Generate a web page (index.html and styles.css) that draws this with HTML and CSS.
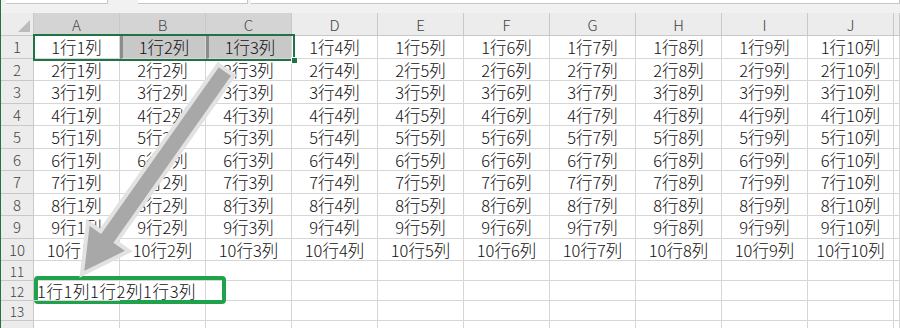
FILE: index.html
```html
<!DOCTYPE html>
<html lang="ja">
<head>
<meta charset="UTF-8">
<title>Sheet1</title>
<link rel="stylesheet" href="styles.css">
</head>
<body>
  <div class="app">
    <div class="toolbar">
      <div class="box namebox"></div>
      <div class="box fxbox"></div>
      <div class="box formula"></div>
    </div>
    <div class="sheet" id="sheet"></div>

    <div class="selection"><span class="handle"></span></div>
    <div class="result-box"></div>

    <svg class="arrow" width="900" height="328" viewBox="0 0 900 328">
      <g transform="translate(226 70) rotate(125.2)">
        <polygon points="0,-9.5 204,-9.5 204,-25 250,0 204,25 204,9.5 0,9.5" fill="#a8a8a8" stroke="#e2e2e2" stroke-width="4" stroke-linejoin="miter"/>
      </g>
    </svg>
  </div>

  <script>
    const cols = ['A', 'B', 'C', 'D', 'E', 'F', 'G', 'H', 'I', 'J', ''];
    const sheet = document.getElementById('sheet');
    let html = '<div class="corner"><span class="tri"></span></div>';

    // 列見出し
    cols.forEach((c, i) => {
      const sel = i < 3 ? ' sel' : '';
      html += `<div class="colhead${sel}">${c}</div>`;
    });

    // 行 (14行目は下端で切れるので番号なし)
    for (let r = 1; r <= 14; r++) {
      const rowClass = r <= 10 ? 'tall' : 'short';
      html += `<div class="rowhead ${rowClass}">${r < 14 ? r : ''}</div>`;
      cols.forEach((c, i) => {
        let text = '';
        let cls = 'cell ' + rowClass;
        if (r <= 10 && i < 10) text = `${r}行${i + 1}列`;
        if (r === 1 && (i === 1 || i === 2)) cls += ' picked';
        if (r === 12 && i === 0) {
          text = '1行1列1行2列1行3列';
          cls += ' left';
        }
        html += `<div class="${cls}">${text}</div>`;
      });
    }
    sheet.innerHTML = html;
  </script>
</body>
</html>
```

FILE: styles.css
```css
body {
margin: 0;
padding: 0;
background: #fff;
font-family: "Noto Sans CJK JP", "Noto Sans", sans-serif;
overflow: hidden;
}

.app {
position: relative;
width: 900px;
height: 328px;
border-left: 1px solid #217346;
box-sizing: border-box;
overflow: hidden;
}

.toolbar {
height: 13px;
background: #f1f1f1;
display: flex;
align-items: flex-start;
}

.box {
height: 3px;
background: #fff;
border-bottom: 1px solid #c6c6c6;
border-right: 1px solid #c6c6c6;
}

.namebox {
margin-left: 5px;
width: 101px;
}

.fxbox {
margin-left: 30px;
width: 109px;
}

.formula {
margin-left: 3px;
flex: 1;
}

.sheet {
display: grid;
grid-template-columns: 33px repeat(10, 86px) 1fr;
grid-auto-rows: auto;
}

.corner, .colhead, .rowhead {
background: #ececec;
color: #444;
border-right: 1px solid #c8c8c8;
border-bottom: 1px solid #c8c8c8;
box-sizing: border-box;
}

.corner {
position: relative;
height: 23px;
}

.tri {
position: absolute;
right: 3px;
bottom: 3px;
width: 0;
height: 0;
border-left: 12px solid transparent;
border-bottom: 12px solid #bcbcbc;
}

.colhead {
height: 23px;
font-size: 15px;
font-weight: 300;
text-align: center;
line-height: 23px;
}

.colhead.sel {
background: #d4d4d4;
color: #4a4a4a;
}

.rowhead {
font-size: 15px;
font-weight: 300;
text-align: center;
}

.rowhead.short {
font-size: 13.5px;
}

.tall {
height: 22.5px;
line-height: 22px;
}

.short {
height: 20px;
line-height: 20px;
}

.cell {
border-right: 1px solid #d6d6d6;
border-bottom: 1px solid #d6d6d6;
box-sizing: border-box;
font-size: 16.5px;
font-weight: 300;
text-align: center;
color: #111;
white-space: nowrap;
}

.cell.picked {
background: #c8c8c8;
border-left: 3px solid #8c8c8c;
}

.cell.left {
text-align: left;
padding-left: 3px;
letter-spacing: 0.6px;
overflow: visible;
position: relative;
z-index: 2;
}

.selection {
position: absolute;
left: 32px;
top: 34px;
width: 262px;
height: 27px;
border: 2px solid #217346;
box-sizing: border-box;
}

.handle {
position: absolute;
right: -5px;
bottom: -5px;
width: 5px;
height: 5px;
background: #217346;
border: 1px solid #fff;
}

.result-box {
position: absolute;
left: 33px;
top: 276px;
width: 192px;
height: 28px;
border: 4px solid #1fa24b;
border-radius: 4px;
box-sizing: border-box;
z-index: 1;
}

.arrow {
position: absolute;
left: -1px;
top: 0;
pointer-events: none;
z-index: 3;
}
```
